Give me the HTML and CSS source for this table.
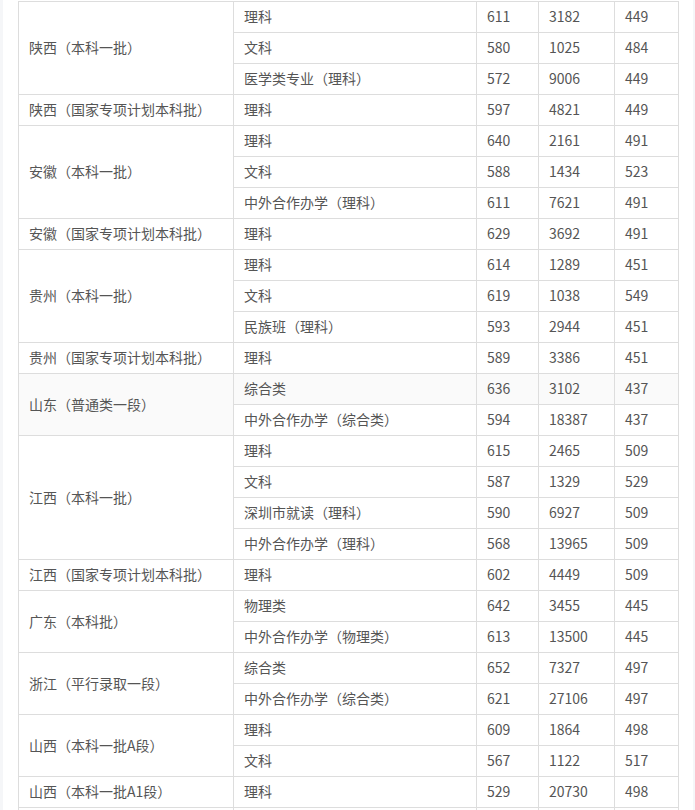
FILE: index.html
```html
<!DOCTYPE html>
<html lang="zh-CN">
<head>
<meta charset="utf-8">
<title>录取分数</title>
<link rel="stylesheet" href="styles.css">
</head>
<body>
<div class="page">
<table class="score">
<colgroup><col class="c1"><col class="c2"><col class="c3"><col class="c4"><col class="c5"></colgroup>
<tbody>
<tr><td rowspan="3">陕西（本科一批）</td><td>理科</td><td>611</td><td>3182</td><td>449</td></tr>
<tr><td>文科</td><td>580</td><td>1025</td><td>484</td></tr>
<tr><td>医学类专业（理科）</td><td>572</td><td>9006</td><td>449</td></tr>
<tr><td>陕西（国家专项计划本科批）</td><td>理科</td><td>597</td><td>4821</td><td>449</td></tr>
<tr><td rowspan="3">安徽（本科一批）</td><td>理科</td><td>640</td><td>2161</td><td>491</td></tr>
<tr><td>文科</td><td>588</td><td>1434</td><td>523</td></tr>
<tr><td>中外合作办学（理科）</td><td>611</td><td>7621</td><td>491</td></tr>
<tr><td>安徽（国家专项计划本科批）</td><td>理科</td><td>629</td><td>3692</td><td>491</td></tr>
<tr><td rowspan="3">贵州（本科一批）</td><td>理科</td><td>614</td><td>1289</td><td>451</td></tr>
<tr><td>文科</td><td>619</td><td>1038</td><td>549</td></tr>
<tr><td>民族班（理科）</td><td>593</td><td>2944</td><td>451</td></tr>
<tr><td>贵州（国家专项计划本科批）</td><td>理科</td><td>589</td><td>3386</td><td>451</td></tr>
<tr class="hl"><td rowspan="2">山东（普通类一段）</td><td>综合类</td><td>636</td><td>3102</td><td>437</td></tr>
<tr><td>中外合作办学（综合类）</td><td>594</td><td>18387</td><td>437</td></tr>
<tr><td rowspan="4">江西（本科一批）</td><td>理科</td><td>615</td><td>2465</td><td>509</td></tr>
<tr><td>文科</td><td>587</td><td>1329</td><td>529</td></tr>
<tr><td>深圳市就读（理科）</td><td>590</td><td>6927</td><td>509</td></tr>
<tr><td>中外合作办学（理科）</td><td>568</td><td>13965</td><td>509</td></tr>
<tr><td>江西（国家专项计划本科批）</td><td>理科</td><td>602</td><td>4449</td><td>509</td></tr>
<tr><td rowspan="2">广东（本科批）</td><td>物理类</td><td>642</td><td>3455</td><td>445</td></tr>
<tr><td>中外合作办学（物理类）</td><td>613</td><td>13500</td><td>445</td></tr>
<tr><td rowspan="2">浙江（平行录取一段）</td><td>综合类</td><td>652</td><td>7327</td><td>497</td></tr>
<tr><td>中外合作办学（综合类）</td><td>621</td><td>27106</td><td>497</td></tr>
<tr><td rowspan="2">山西（本科一批A段）</td><td>理科</td><td>609</td><td>1864</td><td>498</td></tr>
<tr><td>文科</td><td>567</td><td>1122</td><td>517</td></tr>
<tr><td>山西（本科一批A1段）</td><td>理科</td><td>529</td><td>20730</td><td>498</td></tr>
<tr><td></td><td></td><td></td><td></td><td></td></tr>
</tbody>
</table>
</div>
</body>
</html>
```
FILE: styles.css
```css
html, body {
  margin: 0;
  padding: 0;
  background: #f5f6f8;
  overflow: hidden;
}
.page {
  margin: 0 2px 0 3px;
  background: #ffffff;
  padding: 1px 15px 0 15px;
  height: 809px;
  overflow: hidden;
}
.score {
  border-collapse: collapse;
  table-layout: fixed;
  width: 660px;
  font-family: "Noto Sans CJK SC", "Noto Sans", sans-serif;
  font-size: 14px;
  color: #555555;
}
.c1 { width: 215px; }
.c2 { width: 243px; }
.c3 { width: 62px; }
.c4 { width: 76px; }
.c5 { width: 64px; }
.score td {
  border: 1px solid #dddddd;
  height: 30px;
  padding: 0 10px 1px 10px;
  line-height: 29px;
  vertical-align: middle;
  white-space: nowrap;
  box-sizing: border-box;
}
.score tr.hl td {
  background: #fafafa;
}
```
